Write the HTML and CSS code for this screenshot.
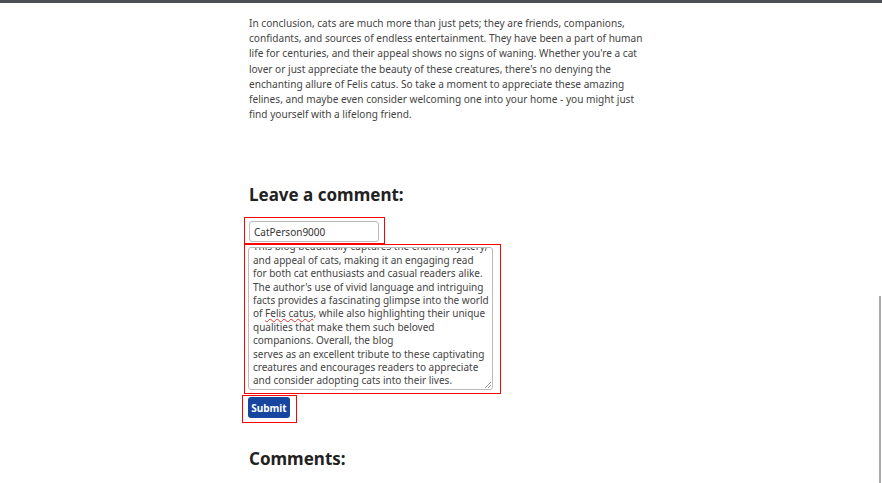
FILE: index.html
```html
<!DOCTYPE html>
<html>
<head>
<meta charset="utf-8">
<link rel="stylesheet" href="styles.css">
</head>
<body>
<div class="topbar"></div>
<main class="content">
  <p class="para">In conclusion, cats are much more than just pets; they are friends, companions,<br>confidants, and sources of endless entertainment. They have been a part of human<br>life for centuries, and their appeal shows no signs of waning. Whether you're a cat<br>lover or just appreciate the beauty of these creatures, there's no denying the<br>enchanting allure of Felis catus. So take a moment to appreciate these amazing<br>felines, and maybe even consider welcoming one into your home - you might just<br>find yourself with a lifelong friend.</p>
  <h2 class="title leave">Leave a comment:</h2>
  <form class="form">
    <div class="hl hl-name"><input class="name" type="text" value="CatPerson9000"></div>
    <div class="hl hl-text">
      <div class="textarea"><div class="ta-inner">This blog beautifully captures the charm, mystery,<br>and appeal of cats, making it an engaging read<br>for both cat enthusiasts and casual readers alike.<br>The author's use of vivid language and intriguing<br>facts provides a fascinating glimpse into the world<br>of <span class="sp">Felis catus</span>, while also highlighting their unique<br>qualities that make them such beloved<br>companions. Overall, the blog<br>serves as an excellent tribute to these captivating<br>creatures and encourages readers to appreciate<br>and consider adopting cats into their lives.</div><span class="grip"></span></div>
    </div>
    <div class="hl hl-btn"><button class="submit" type="button">Submit</button></div>
  </form>
  <h2 class="title comments">Comments:</h2>
</main>
<div class="scroll"></div>
</body>
</html>
```
FILE: styles.css
```css
html, body { margin: 0; padding: 0; background: #fff; }
body { font-family: "Noto Sans", sans-serif; color: #333; overflow: hidden; height: 483px; }
.topbar { height: 3px; background: #4b4e53; }
.content { width: 395px; margin: 0 0 0 249px; }
.para { font-size: 10.1px; line-height: 15.2px; margin: 13px 0 0; color: #444; white-space: nowrap; }
.title { font-size: 17px; font-weight: 700; margin: 0; color: #222; line-height: 24px; }
.leave { margin-top: 61px; }
.form { display: flex; flex-direction: column; align-items: flex-start; margin-left: -5px; margin-top: 10px; }
.hl { border: 1px solid #ff0000; }
.hl-name { padding: 3px 5px 1px 4px; }
.name { width: 130px; height: 21px; box-sizing: border-box; border: 1px solid #bbb; border-radius: 3px; font-family: "Noto Sans", sans-serif; font-size: 10px; color: #333; padding: 0 4px; margin: 0; display: block; }
.hl-text { padding: 2px 7px 3px 3px; }
.textarea { position: relative; width: 245px; height: 143px; box-sizing: border-box; border: 1px solid #bbb; border-radius: 3px; overflow: hidden; padding: 0 4px; font-size: 10px; line-height: 13.4px; color: #444; white-space: nowrap; }
.ta-inner { margin-top: -8px; }
.sp { text-decoration: underline wavy #e53030; text-decoration-thickness: 1px; text-underline-offset: 1px; }
.grip { position: absolute; right: 1px; bottom: 1px; width: 6px; height: 6px; background: linear-gradient(135deg, transparent 45%, #999 45%, #999 55%, transparent 55%, transparent 70%, #999 70%, #999 80%, transparent 80%); }
.hl-btn { margin-left: -2px; padding: 1px 6px 4px 5px; margin-top: 1px; }
.submit { width: 42px; background: #1646a0; color: #fff; border: 0; border-radius: 3px; font-family: "Noto Sans", sans-serif; font-weight: 700; font-size: 10px; height: 21px; padding: 0; display: block; }
.comments { margin-top: 24px; }
.scroll { position: absolute; right: 1px; top: 296px; width: 2px; height: 187px; background: #aaa; }
```
